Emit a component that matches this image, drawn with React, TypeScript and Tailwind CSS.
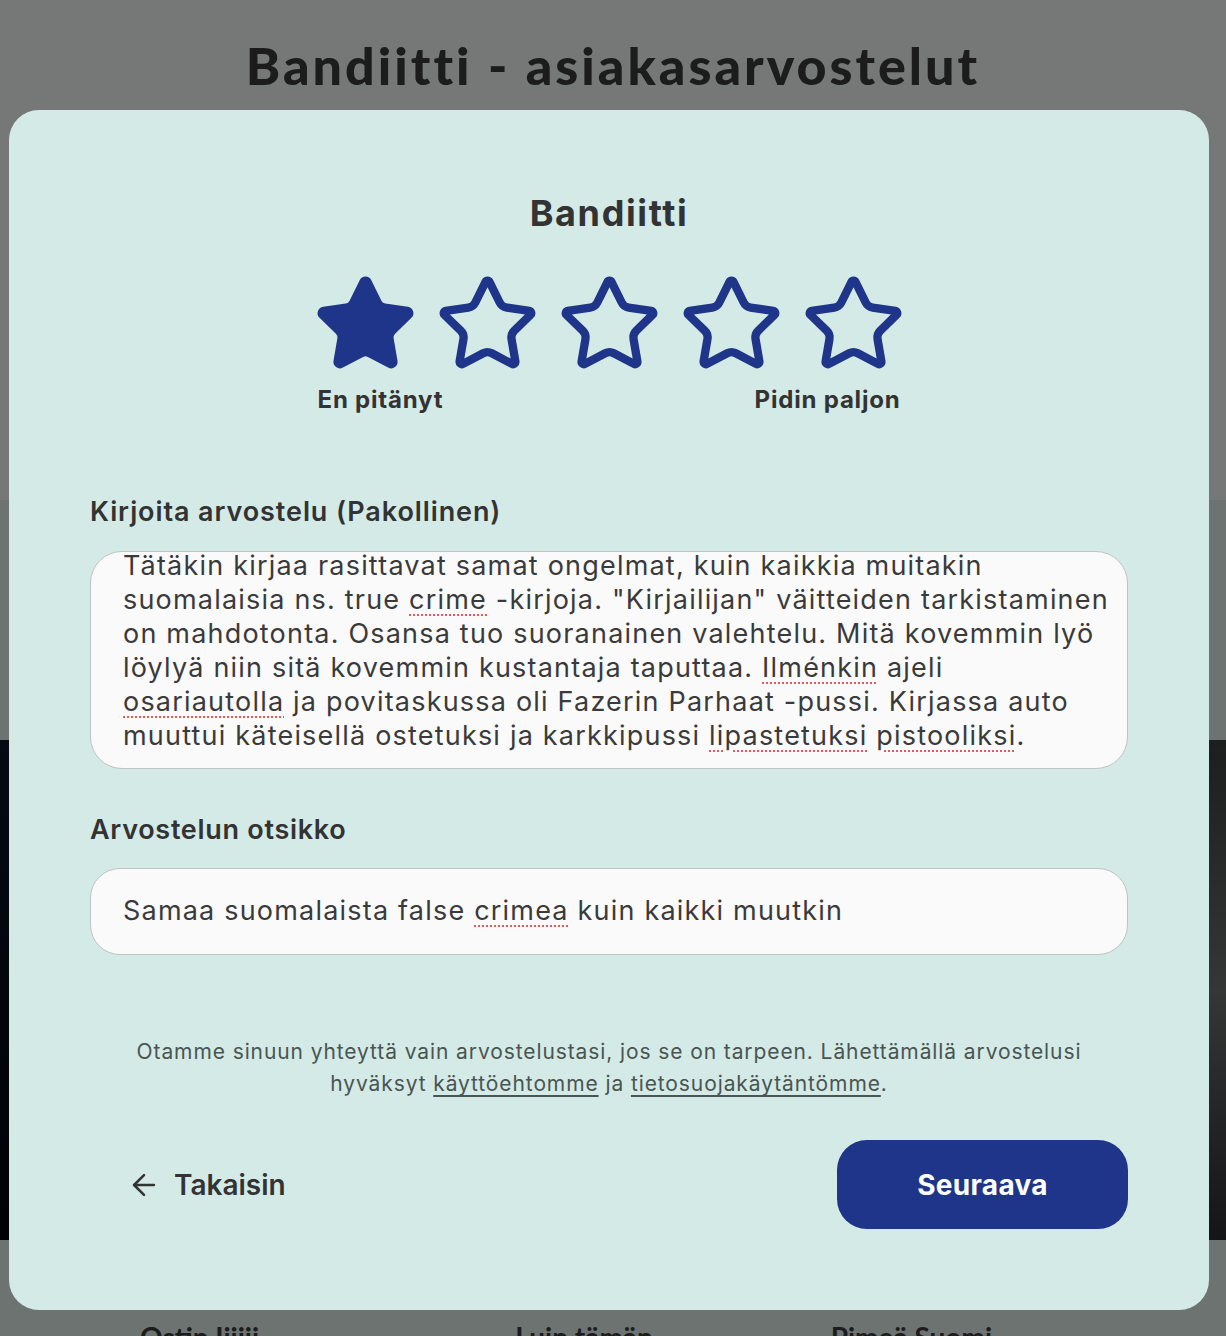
import React from 'react';
import { Star, ArrowLeft } from 'lucide-react';

const body = { fontFamily: 'Inter, "Open Sans", sans-serif' };
const head = { fontFamily: 'Lato, Inter, sans-serif' };

function Misspelled({ children }: { children: React.ReactNode }) {
  return (
    <span className="underline decoration-dotted decoration-[#e25b5b] decoration-2 underline-offset-[5px]">
      {children}
    </span>
  );
}

const reviewLines: React.ReactNode[] = [
  <>Tätäkin kirjaa rasittavat samat ongelmat, kuin kaikkia muitakin</>,
  <>suomalaisia ns. true <Misspelled>crime</Misspelled> -kirjoja. &quot;Kirjailijan&quot; väitteiden tarkistaminen</>,
  <>on mahdotonta. Osansa tuo suoranainen valehtelu. Mitä kovemmin lyö</>,
  <>löylyä niin sitä kovemmin kustantaja taputtaa. <Misspelled>Ilménkin</Misspelled> ajeli</>,
  <><Misspelled>osariautolla</Misspelled> ja povitaskussa oli Fazerin Parhaat -pussi. Kirjassa auto</>,
  <>muuttui käteisellä ostetuksi ja karkkipussi <Misspelled>lipastetuksi</Misspelled> <Misspelled>pistooliksi</Misspelled>.</>,
];

function BackgroundPage() {
  return (
    <div className="w-full h-full bg-[#eaf0ef]">
      <h1 className="pt-[34px] text-center text-[52px] leading-[62px] font-black text-[#383838] tracking-[3px]" style={head}>
        Bandiitti - asiakasarvostelut
      </h1>
      <div className="mt-[404px] bg-[#d9e6e3] h-[900px]">
        <div className="grid grid-cols-3 gap-[20px] pt-[240px]">
          <div>
            <div className="h-[500px] bg-gradient-to-b from-[#0b1428] to-[#02050b]" />
            <div className="mt-[80px] pl-[140px] text-[28px] leading-[34px] font-bold text-[#383838]" style={head}>Ostin Iiiiii</div>
          </div>
          <div>
            <div className="h-[500px] bg-[#2a2a2a]" />
            <div className="mt-[80px] pl-[100px] text-[28px] leading-[34px] font-bold text-[#383838]" style={head}>Luin tämän</div>
          </div>
          <div>
            <div className="h-[500px] bg-gradient-to-b from-[#3a3d3c] via-[#6a6d6c] to-[#2b2a30]" />
            <div className="mt-[80px] pl-[0px] text-[28px] leading-[34px] font-bold text-[#383838]" style={head}>Pimeä Suomi</div>
          </div>
        </div>
      </div>
    </div>
  );
}

export default function App() {
  return (
    <div className="relative w-full h-[1336px] overflow-hidden" style={body}>
      <BackgroundPage />
      <div className="absolute inset-0 bg-black/50" />

      <div className="absolute left-[9px] top-[110px] w-[1200px] h-[1200px] rounded-[30px] bg-[#d4eae7] px-[81px] pt-[81px] text-[#333333] flex flex-col">
        <h2 className="text-center text-[36px] leading-[44px] font-bold tracking-[1.6px]">Bandiitti</h2>

        <div className="mx-auto mt-[37px] w-[593px]">
          <div className="flex gap-[17px] text-[#1e358a]">
            {[0, 1, 2, 3, 4].map((i) => (
              <Star key={i} size={105} strokeWidth={1.9} fill={i === 0 ? 'currentColor' : 'none'} />
            ))}
          </div>
          <div className="mt-[8px] flex justify-between px-[5px] text-[24px] leading-[30px] font-bold tracking-[0.8px]">
            <span>En pitänyt</span>
            <span>Pidin paljon</span>
          </div>
        </div>

        <label className="mt-[80px] text-[27px] leading-[34px] font-semibold tracking-[0.9px]">Kirjoita arvostelu (Pakollinen)</label>
        <div className="mt-[22px] h-[218px] rounded-[32px] border-[1.5px] border-[#bfc3c2] bg-[#fafafa] px-[32px] overflow-hidden">
          <div className="-mt-[3px] text-[27px] leading-[34px] tracking-[1.2px] text-[#3a3a3a]">
            {reviewLines.map((line, i) => (
              <div key={i} className="whitespace-nowrap">{line}</div>
            ))}
          </div>
        </div>

        <label className="mt-[44px] text-[27px] leading-[34px] font-semibold tracking-[0.7px]">Arvostelun otsikko</label>
        <div className="mt-[21px] h-[87px] rounded-[30px] border-[1.5px] border-[#bfc3c2] bg-[#fafafa] px-[32px] flex items-center text-[27px] tracking-[1.2px] text-[#3a3a3a]">
          <span>Samaa suomalaista false <Misspelled>crimea</Misspelled> kuin kaikki muutkin</span>
        </div>

        <p className="mt-[81px] text-center text-[21px] leading-[32px] tracking-[0.9px] text-[#4a5552]">
          Otamme sinuun yhteyttä vain arvostelustasi, jos se on tarpeen. Lähettämällä arvostelusi
          <br />
          hyväksyt <a className="underline underline-offset-[4px]">käyttöehtomme</a> ja{' '}
          <a className="underline underline-offset-[4px]">tietosuojakäytäntömme</a>.
        </p>

        <div className="mt-[40px] flex items-center justify-between">
          <button className="ml-[37px] flex items-center gap-[13px] text-[28px] font-semibold text-[#333333]">
            <ArrowLeft size={34} strokeWidth={1.8} />
            <span>Takaisin</span>
          </button>
          <button className="w-[291px] h-[89px] rounded-[30px] bg-[#1e358a] text-white text-[28px] font-bold tracking-[0.3px]">
            Seuraava
          </button>
        </div>
      </div>
    </div>
  );
}
